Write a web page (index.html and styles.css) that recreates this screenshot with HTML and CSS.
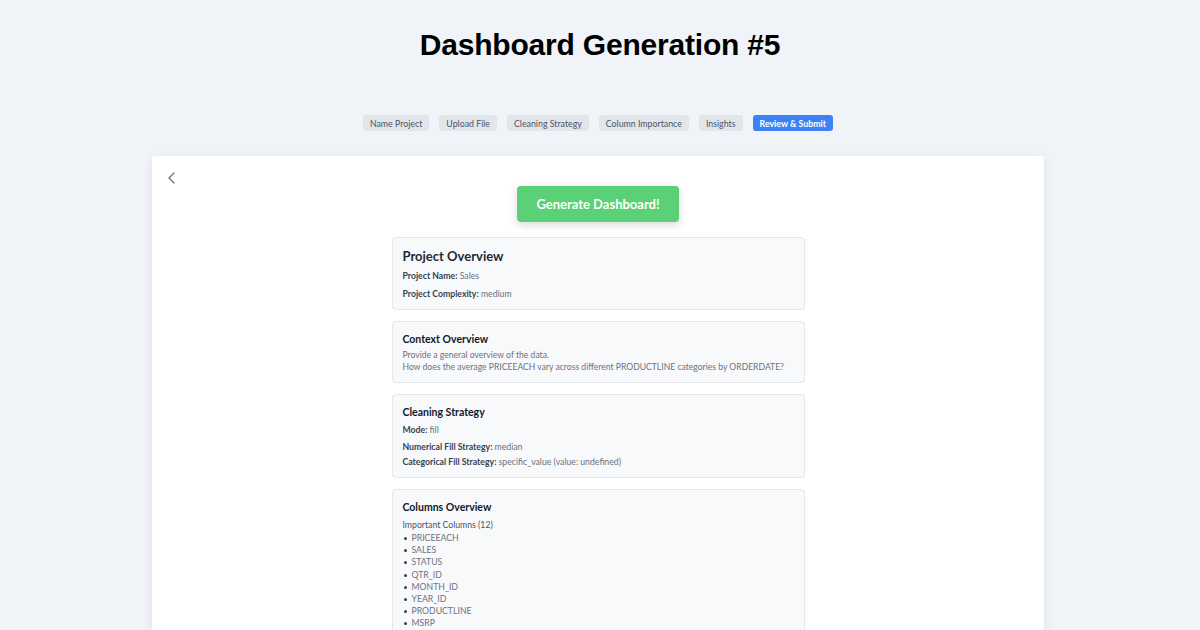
FILE: index.html
```html
<!DOCTYPE html>
<html lang="en">
<head>
<meta charset="utf-8">
<title>Dashboard Generation #5</title>
<link rel="stylesheet" href="styles.css">
</head>
<body>
<header class="page-head">
  <h1 class="page-title">Dashboard Generation #5</h1>
</header>
<div class="stage">
  <nav class="steps">
    <span class="step">Name Project</span>
    <span class="step">Upload File</span>
    <span class="step">Cleaning Strategy</span>
    <span class="step">Column Importance</span>
    <span class="step">Insights</span>
    <span class="step step-active">Review &amp; Submit</span>
  </nav>
  <main class="panel">
    <div class="panel-top">
      <button class="back" aria-label="Back">
        <svg width="10" height="12" viewBox="0 0 10 12"><path d="M7 1 L2 6 L7 11" fill="none" stroke="#6b7280" stroke-width="1.3" stroke-linecap="round" stroke-linejoin="round"/></svg>
      </button>
    </div>
    <div class="content">
      <button class="generate">Generate Dashboard!</button>
      <section class="card">
        <h2 class="card-title card-title-lg">Project Overview</h2>
        <p class="row"><b>Project Name:</b> <span class="val">Sales</span></p>
        <p class="row row-m6"><b>Project Complexity:</b> <span class="val">medium</span></p>
      </section>
      <section class="card">
        <h3 class="card-title card-title-t">Context Overview</h3>
        <p class="text">Provide a general overview of the data.<br>How does the average PRICEEACH vary across different PRODUCTLINE categories by ORDERDATE?</p>
      </section>
      <section class="card">
        <h3 class="card-title">Cleaning Strategy</h3>
        <p class="row"><b>Mode:</b> <span class="val">fill</span></p>
        <p class="row row-m5"><b>Numerical Fill Strategy:</b> <span class="val">median</span></p>
        <p class="row row-m3"><b>Categorical Fill Strategy:</b> <span class="val">specific_value (value: undefined)</span></p>
      </section>
      <section class="card card-open">
        <h3 class="card-title">Columns Overview</h3>
        <p class="sub">Important Columns (12)</p>
        <ul class="cols">
          <li>PRICEEACH</li>
          <li>SALES</li>
          <li>STATUS</li>
          <li>QTR_ID</li>
          <li>MONTH_ID</li>
          <li>YEAR_ID</li>
          <li>PRODUCTLINE</li>
          <li>MSRP</li>
        </ul>
      </section>
    </div>
  </main>
</div>
</body>
</html>
```

FILE: styles.css
```css
* { box-sizing: border-box; }
html, body { margin: 0; padding: 0; }
body {
  background: #f0f3f8;
  font-family: "Lato", "Liberation Sans", sans-serif;
  color: #1f2937;
  height: 630px;
  overflow: hidden;
}
.page-head {
  padding-top: 26px;
  text-align: center;
}
.page-title {
  margin: 0;
  font-family: "Liberation Sans", Arial, sans-serif;
  font-weight: 700;
  font-size: 30px;
  line-height: 38px;
  color: #000;
  letter-spacing: -0.2px;
}
.stage {
  padding-right: 4px;
}
.steps {
  display: flex;
  justify-content: center;
  gap: 10px;
  margin-top: 51px;
}
.step {
  display: inline-flex;
  align-items: center;
  height: 16px;
  padding: 0 7px;
  border-radius: 3px;
  background: #e2e5ea;
  color: #4b5563;
  font-size: 8.8px;
}
.step-active {
  background: #3b82f6;
  color: #fff;
  font-weight: 700;
}
.panel {
  width: 892px;
  margin: 25px auto 0;
  background: #fff;
  border-radius: 3px;
  box-shadow: 0 2px 10px rgba(30, 41, 59, 0.08);
  padding: 16px 0 0;
  height: 500px;
}
.panel-top {
  padding-left: 15px;
  height: 12px;
}
.back {
  border: 0;
  background: none;
  padding: 0;
  display: block;
  cursor: pointer;
}
.content {
  display: flex;
  flex-direction: column;
  align-items: center;
  gap: 11px;
}
.generate {
  margin-top: 2px;
  margin-bottom: 4px;
  width: 162px;
  height: 36px;
  border: 0;
  border-radius: 4px;
  background: #5ad177;
  color: #fff;
  font-family: inherit;
  font-size: 13px;
  font-weight: 700;
  box-shadow: 0 3px 8px rgba(0, 0, 0, 0.15);
}
.card {
  width: 413px;
  background: #f8f9fb;
  border: 1px solid #e3e6ea;
  border-radius: 4px;
  padding: 9px 10px 9px;
}
.card-open { padding-bottom: 20px; }
.card-title {
  margin: 0 0 4px;
  font-size: 10.5px;
  line-height: 16px;
  font-weight: 700;
  color: #111827;
}
.card-title-t { margin-bottom: 2px; }
.card-title-lg {
  font-size: 13px;
  line-height: 18px;
  font-weight: 700;
  color: #1f2937;
  margin-bottom: 5px;
}
.row {
  margin: 0;
  font-size: 8.7px;
  line-height: 12px;
  color: #1f2937;
}
.row b { font-weight: 700; color: #374151; }
.row-m6 { margin-top: 6px; }
.row-m5 { margin-top: 5px; }
.row-m3 { margin-top: 3px; }
.val { color: #6b7280; }
.text {
  margin: 0;
  font-size: 8.6px;
  line-height: 12px;
  color: #6b7280;
  white-space: nowrap;
}
.sub {
  margin: 0;
  font-size: 8.7px;
  line-height: 12px;
  color: #4b5563;
}
.cols {
  margin: 1px 0 0;
  padding-left: 9px;
  font-size: 8.7px;
  line-height: 12.2px;
  color: #6b7280;
  list-style: none;
}
.cols li { position: relative; }
.cols li::before {
  content: "";
  position: absolute;
  left: -8px;
  top: 5px;
  width: 3px;
  height: 3px;
  border-radius: 50%;
  background: #374151;
}
```
